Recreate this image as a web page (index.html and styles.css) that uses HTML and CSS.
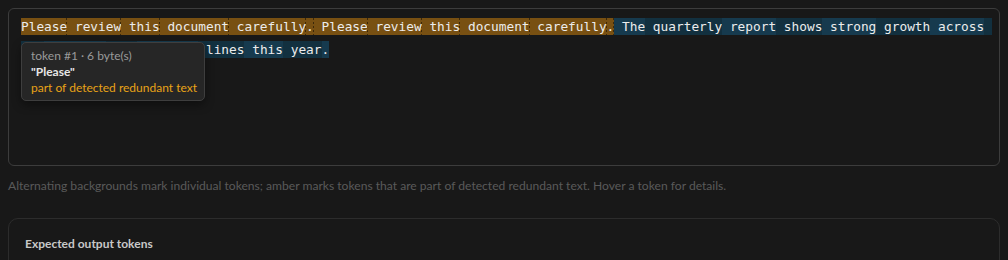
FILE: index.html
```html
<!DOCTYPE html>
<html lang="en">
<head>
    <meta charset="UTF-8">
    <meta name="viewport" content="width=device-width, initial-scale=1.0">
    <title>Token Inspector</title>
    <link rel="stylesheet" href="styles.css">
</head>
<body>
    <div class="page">
        <div class="field">
            <div class="field-label">Prompt</div>
            <div class="token-box">
                <div class="tokens"><span class="tok red">Please</span><span class="tok red"> review</span><span class="tok red"> this</span><span class="tok red"> document</span><span class="tok red"> carefully</span><span class="tok red">.</span><span class="tok red"> Please</span><span class="tok red"> review</span><span class="tok red"> this</span><span class="tok red"> document</span><span class="tok red"> carefully</span><span class="tok red">.</span><span class="tok a"> The</span><span class="tok b"> quarterly</span><span class="tok a"> report</span><span class="tok b"> shows</span><span class="tok a"> strong</span><span class="tok b"> growth</span><span class="tok a"> across</span><span class="tok b"> all</span><span class="tok a"> regions</span><span class="tok b"> and</span><span class="tok a"> product</span><span class="tok b"> lines</span><span class="tok a"> this</span><span class="tok b"> year</span><span class="tok a">.</span></div>
                <div class="tooltip">
                    <div class="tip-meta">token #1 · 6 byte(s)</div>
                    <div class="tip-text">"Please"</div>
                    <div class="tip-flag">part of detected redundant text</div>
                </div>
            </div>
            <p class="hint">Alternating backgrounds mark individual tokens; amber marks tokens that are part of detected redundant text. Hover a token for details.</p>
        </div>

        <div class="card">
            <h3>Expected output tokens</h3>
        </div>
    </div>
</body>
</html>
```

FILE: styles.css
```css
body {
    margin: 0;
    padding: 0;
    background-color: #181818;
    color: #cccccc;
    font-family: Lato, "Noto Sans", "Liberation Sans", sans-serif;
    font-size: 12px;
    overflow: hidden;
}
.page {
    padding: 0 8px;
    margin-top: -14px;
}
.field-label {
    font-weight: 700;
    line-height: 16px;
    margin-bottom: 6px;
    color: #cccccc;
}
.token-box {
    position: relative;
    border: 1px solid #3c3c3c;
    border-radius: 6px;
    padding: 6px 12px;
    height: 144px;
}
.tokens {
    font-family: "DejaVu Sans Mono", "Liberation Mono", monospace;
    font-size: 12.8px;
    line-height: 23px;
    color: #ececec;
    white-space: pre-wrap;
}
.tok {
    padding: 1px 0;
}
.tok.red {
    background: linear-gradient(to bottom, rgba(0, 0, 0, 0.5) 50%, transparent 50%) right top / 1px 4px repeat-y, #785012;
}
.tok.a {
    background-color: #163a4e;
}
.tok.b {
    background-color: #12303f;
}
.tooltip {
    position: absolute;
    left: 12px;
    top: 33px;
    width: 164px;
    padding: 5px 9px 4px;
    background-color: #262626;
    border: 1px solid #3e3e3e;
    border-radius: 5px;
    line-height: 16px;
    white-space: nowrap;
    box-shadow: 0 4px 10px rgba(0, 0, 0, 0.4);
}
.tip-meta {
    color: #9a9a9a;
}
.tip-text {
    color: #e6e6e6;
    font-weight: 700;
}
.tip-flag {
    color: #e8a317;
}
.hint {
    margin: 12px 0 0;
    font-size: 12.1px;
    line-height: 16px;
    color: #5a5a5a;
}
.card {
    margin-top: 24px;
    border: 1px solid #2c2c2c;
    border-radius: 10px;
    padding: 17px 16px;
    height: 80px;
}
.card h3 {
    margin: 0;
    font-size: 12px;
    line-height: 16px;
    font-weight: 700;
    color: #c8c8c8;
}
```
